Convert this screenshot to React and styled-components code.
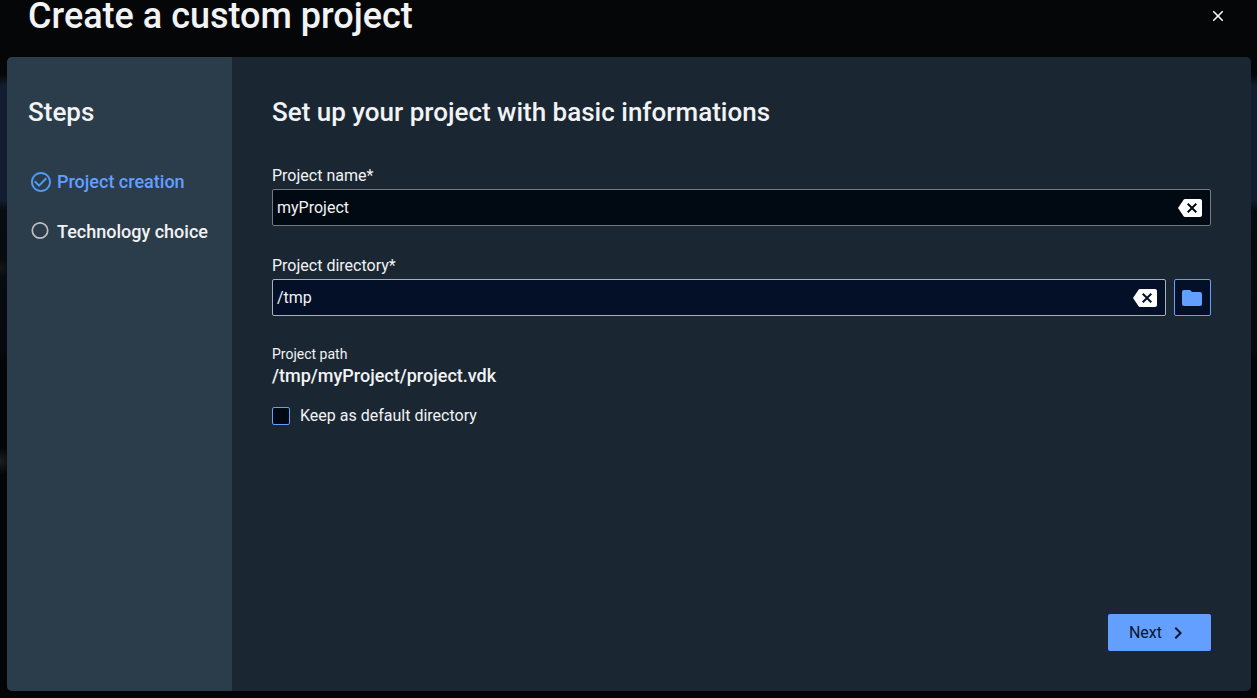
import { useState } from "react";
import styled, { createGlobalStyle } from "styled-components";
import {
  MdBackspace,
  MdCheckCircleOutline,
  MdChevronRight,
  MdClose,
  MdFolder,
} from "react-icons/md";

const GlobalStyle = createGlobalStyle`
  * {
    box-sizing: border-box;
  }
  body {
    margin: 0;
    background-color: #040608;
    color: #f2f3f4;
    font-family: Roboto, "Liberation Sans", sans-serif;
    font-size: 16px;
    line-height: 20px;
  }
  h1, h2, p, ol {
    margin: 0;
    padding: 0;
  }
  button, input {
    font: inherit;
    color: inherit;
  }
`;

const Backdrop = styled.div`
  min-height: 100vh;
  display: flex;
  flex-direction: column;
  padding: 0 6px 7px 7px;
  background:
    radial-gradient(circle at 0 268px, #141618, transparent 10px),
    radial-gradient(circle at 0 461px, #1b1d1f, transparent 14px),
    linear-gradient(
      #040608 74px,
      #121d32 86px,
      #121d32 200px,
      #070c10 210px,
      #060a0e 350px,
      #030506 364px
    );
`;

const Header = styled.header`
  display: flex;
  justify-content: space-between;
  align-items: center;
  padding: 0 24px 25px 21px;
`;

const Title = styled.h1`
  font-size: 36px;
  line-height: 32px;
  font-weight: 500;
`;

const IconButton = styled.button`
  display: flex;
  padding: 0;
  border: none;
  background: none;
  color: ${({ $color }) => $color || "#fff"};
  font-size: ${({ $size }) => $size}px;
  cursor: pointer;
`;

const Panel = styled.main`
  flex: 1;
  display: flex;
  border-radius: 5px;
  overflow: hidden;
  background-color: #1a2733;
`;

const Sidebar = styled.aside`
  flex: 0 0 225px;
  padding: 40px 21px;
  background-color: #2b3c4a;
`;

const Heading = styled.h2`
  font-size: 26px;
  line-height: 30px;
  font-weight: 500;
`;

const StepList = styled.ol`
  display: flex;
  flex-direction: column;
  gap: 26px;
  margin-top: 43px;
  list-style: none;
`;

const Step = styled.li`
  display: flex;
  align-items: center;
  gap: 4px;
  font-size: 18px;
  font-weight: 500;
  white-space: nowrap;
  color: ${({ $active }) => ($active ? "#639fff" : "#f2f3f4")};
`;

const StepIcon = styled.span`
  display: flex;
  justify-content: center;
  width: 25px;
  font-size: 24px;
  color: ${({ $active }) => ($active ? "#4f9af0" : "#bdbdbd")};
`;

const Content = styled.form`
  flex: 1;
  min-width: 0;
  display: flex;
  flex-direction: column;
  padding: 40px;
`;

const Fields = styled.div`
  display: flex;
  flex-direction: column;
  gap: 30px;
  margin-top: 39px;
`;

const Field = styled.div`
  display: flex;
  flex-direction: column;
  gap: 3px;
`;

const FieldRow = styled.div`
  display: flex;
  gap: 8px;
`;

const InputBox = styled.div`
  flex: 1;
  display: flex;
  align-items: center;
  height: 37px;
  padding: 0 8px 0 4px;
  border: 1px solid ${({ $active }) => ($active ? "#a9b0bb" : "#737a80")};
  border-radius: 2px;
  background-color: ${({ $active }) => ($active ? "#031027" : "#010a12")};
`;

const Input = styled.input`
  flex: 1;
  min-width: 0;
  padding: 0;
  border: none;
  outline: none;
  background: none;
`;

const FolderButton = styled(IconButton)`
  align-items: center;
  width: 37px;
  height: 37px;
  padding: 0 6px 0 5px;
  border: 1px solid #639fff;
  border-radius: 2px;
  background-color: #031027;
`;

const PathLabel = styled.p`
  margin-top: 28px;
  font-size: 14px;
`;

const Path = styled.p`
  margin-top: 2px;
  font-size: 18px;
  font-weight: 500;
`;

const CheckLabel = styled.label`
  display: flex;
  align-items: center;
  gap: 10px;
  margin-top: 20px;
`;

const Checkbox = styled.input`
  appearance: none;
  width: 18px;
  height: 18px;
  margin: 0;
  border: 1px solid #639fff;
  border-radius: 2px;
  background-color: #010a12;
  &:checked {
    background-color: #639fff;
  }
`;

const Footer = styled.div`
  display: flex;
  justify-content: flex-end;
  margin-top: auto;
`;

const NextButton = styled.button`
  display: flex;
  align-items: center;
  gap: 4px;
  height: 37px;
  padding: 0 21px;
  border: none;
  border-radius: 2px;
  background-color: #639fff;
  color: #06152b;
  cursor: pointer;
`;

const ClearableInput = function ({ id, value, onChange, active }) {
  return (
    <InputBox $active={active}>
      <Input
        id={id}
        type="text"
        value={value}
        onChange={(e) => onChange(e.target.value)}
      />
      <IconButton
        type="button"
        $size={24}
        aria-label="Clear"
        onClick={() => onChange("")}
      >
        <MdBackspace />
      </IconButton>
    </InputBox>
  );
};

const EmptyCircle = function () {
  return (
    <svg width="24" height="24" viewBox="0 0 24 24">
      <circle
        cx="11"
        cy="10.5"
        r="7.7"
        fill="none"
        stroke="currentColor"
        strokeWidth="1.7"
      />
    </svg>
  );
};

const App = function () {
  const [name, setName] = useState("myProject");
  const [directory, setDirectory] = useState("/tmp");

  return (
    <>
      <GlobalStyle />
      <Backdrop>
        <Header>
          <Title>Create a custom project</Title>
          <IconButton type="button" $size={18} aria-label="Close">
            <MdClose />
          </IconButton>
        </Header>
        <Panel>
          <Sidebar>
            <Heading>Steps</Heading>
            <StepList>
              <Step $active>
                <StepIcon $active>
                  <MdCheckCircleOutline />
                </StepIcon>
                Project creation
              </Step>
              <Step>
                <StepIcon>
                  <EmptyCircle />
                </StepIcon>
                Technology choice
              </Step>
            </StepList>
          </Sidebar>
          <Content onSubmit={(e) => e.preventDefault()}>
            <Heading>Set up your project with basic informations</Heading>
            <Fields>
              <Field>
                <label htmlFor="projectName">Project name*</label>
                <FieldRow>
                  <ClearableInput
                    id="projectName"
                    value={name}
                    onChange={setName}
                  />
                </FieldRow>
              </Field>
              <Field>
                <label htmlFor="projectDirectory">Project directory*</label>
                <FieldRow>
                  <ClearableInput
                    id="projectDirectory"
                    value={directory}
                    onChange={setDirectory}
                    active
                  />
                  <FolderButton
                    type="button"
                    $size={24}
                    $color="#639fff"
                    aria-label="Browse"
                  >
                    <MdFolder />
                  </FolderButton>
                </FieldRow>
              </Field>
            </Fields>
            <PathLabel>Project path</PathLabel>
            <Path>
              {directory}/{name}/project.vdk
            </Path>
            <CheckLabel>
              <Checkbox type="checkbox" />
              Keep as default directory
            </CheckLabel>
            <Footer>
              <NextButton type="submit">
                Next
                <MdChevronRight size={24} />
              </NextButton>
            </Footer>
          </Content>
        </Panel>
      </Backdrop>
    </>
  );
};

export default App;
